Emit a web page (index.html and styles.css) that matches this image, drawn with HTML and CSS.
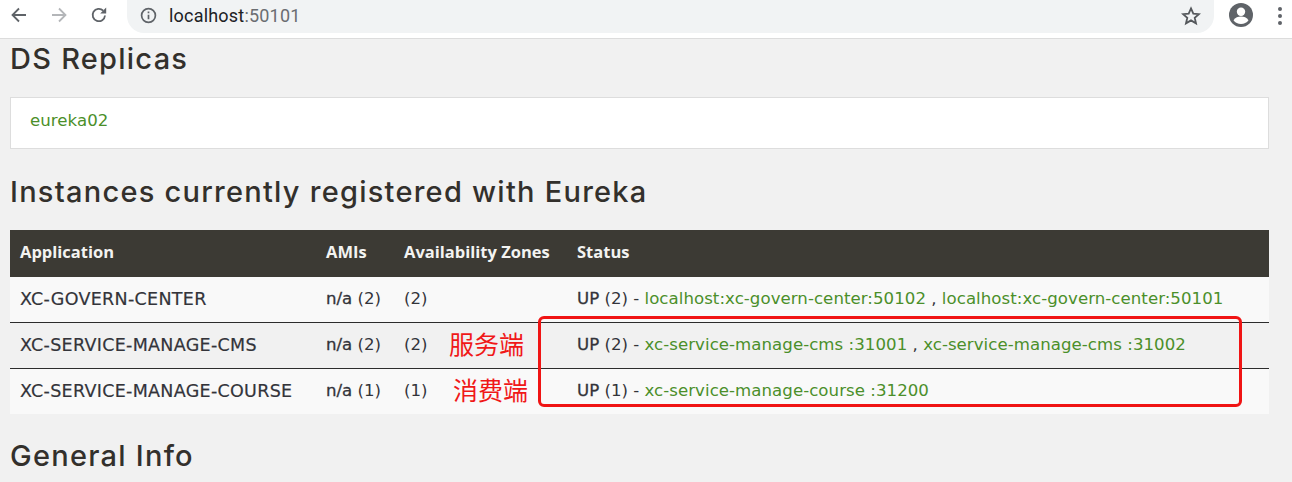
FILE: index.html
```html
<!DOCTYPE html>
<html lang="en">
<head>
<meta charset="utf-8">
<title>Eureka</title>
<link rel="stylesheet" href="styles.css">
</head>
<body>
<header class="toolbar">
  <svg class="nav nav-back" viewBox="0 0 18 18"><path d="M16 9H3M9 2.5 2.5 9 9 15.500" /></svg>
  <svg class="nav nav-forward" viewBox="0 0 18 18"><path d="M2 9h13M9 2.500 15.500 9 9 15.500" /></svg>
  <svg class="nav nav-reload" viewBox="0 0 18 18"><path d="M15 9.500A6.200 6.200 0 1 1 13.200 4.600" /><path class="solid" d="M16.200 1.500v6h-6z" /></svg>
  <div class="omnibox">
    <svg class="info" viewBox="0 0 16 16"><circle cx="8" cy="8" r="6.500" /><path d="M8 7.200v4.300M8 4.300v1.500" /></svg>
    <span class="url">localhost<span class="url-dim">:50101</span></span>
    <svg class="star" viewBox="0 0 20 20"><path d="M10 2.400l2.300 5.200 5.600.5-4.200 3.700 1.300 5.500-5-2.900-5 2.900 1.300-5.500-4.200-3.700 5.600-.5z" /></svg>
  </div>
  <svg class="avatar" viewBox="0 0 24 24"><circle class="disc" cx="12" cy="12" r="12" /><circle class="face" cx="12" cy="8.800" r="4.200" /><path class="face" d="M4.500 17.200c1.600-2.700 4.700-3.700 7.500-3.700s5.900 1 7.500 3.700A9.500 9.500 0 0 1 12 21a9.500 9.500 0 0 1-7.500-3.800z" /></svg>
  <div class="menu"><i></i><i></i><i></i></div>
</header>
<main class="page">
  <h2 class="first">DS Replicas</h2>
  <div class="panel"><a href="#">eureka02</a></div>
  <h2>Instances currently registered with Eureka</h2>
  <table class="instances">
    <colgroup><col class="c1"><col class="c2"><col class="c3"><col></colgroup>
    <thead><tr><th>Application</th><th>AMIs</th><th>Availability Zones</th><th>Status</th></tr></thead>
    <tbody>
      <tr><td class="app">XC-GOVERN-CENTER</td><td><b>n/a</b> (2)</td><td>(2)</td><td><b>UP</b> (2) - <a href="#">localhost:xc-govern-center:50102</a> , <a href="#">localhost:xc-govern-center:50101</a></td></tr>
      <tr><td class="app">XC-SERVICE-MANAGE-CMS</td><td><b>n/a</b> (2)</td><td>(2)</td><td><b>UP</b> (2) - <a href="#">xc-service-manage-cms :31001</a> , <a href="#">xc-service-manage-cms :31002</a></td></tr>
      <tr><td class="app">XC-SERVICE-MANAGE-COURSE</td><td><b>n/a</b> (1)</td><td>(1)</td><td><b>UP</b> (1) - <a href="#">xc-service-manage-course :31200</a></td></tr>
    </tbody>
  </table>
  <h2 class="last">General Info</h2>
</main>
<span class="note note-a">服务端</span>
<span class="note note-b">消费端</span>
<div class="redbox"></div>
</body>
</html>
```
FILE: styles.css
```css
html, body { margin: 0; height: 482px; overflow: hidden; }
body { background: #f1f1f1; font-family: "DejaVu Sans", sans-serif; color: #2f3034; position: relative; }
.toolbar { height: 39px; box-sizing: border-box; background: #fff; border-bottom: 1px solid #dcdcdc; display: flex; align-items: flex-start; padding-left: 10px; }
.nav { width: 18px; height: 18px; margin-top: 6px; fill: none; stroke: #5f6368; stroke-width: 1.800; }
.nav-forward { margin-left: 22px; stroke: #b4b6b9; }
.nav-reload { margin-left: 22px; }
.nav .solid { fill: #5f6368; stroke: none; }
.omnibox { margin-left: 19px; width: 1087px; height: 33px; background: #f1f3f4; border-radius: 0 0 17px 17px; display: flex; align-items: center; box-sizing: border-box; padding: 0 13px 2px 13px; }
.info { width: 17px; height: 17px; fill: none; stroke: #5f6368; stroke-width: 1.600; }
.url { margin-left: 12px; font-size: 18px; letter-spacing: 0.2px; color: #202124; font-family: "Roboto", sans-serif; }
.url-dim { color: #6a6d71; }
.star { margin-left: auto; width: 20px; height: 20px; fill: none; stroke: #55585c; stroke-width: 1.800; }
.avatar { width: 24px; height: 24px; margin: 3px 0 0 15px; }
.disc { fill: #5f6368; }
.face { fill: #fff; }
.menu { margin: 7px 0 0 25px; display: flex; flex-direction: column; gap: 3px; }
.menu i { width: 4px; height: 4px; border-radius: 50%; background: #5f6368; }
.page { padding: 0 23px 0 10px; }
h2 { margin: 0; font-family: "Inter", sans-serif; font-weight: 500; font-size: 29px; line-height: 36px; color: #33302c; letter-spacing: 1.250px; }
h2.first { padding-top: 2px; }
.panel { margin-top: 20px; height: 52px; box-sizing: border-box; background: #fff; border: 1px solid #dddddd; padding: 11px 19px; font-size: 16.600px; line-height: 24px; }
a { color: #4b8f2a; text-decoration: none; letter-spacing: 0.05px; }
.panel + h2 { margin-top: 25px; }
.instances { margin-top: 20px; width: 1259px; table-layout: fixed; border-collapse: collapse; font-size: 16.600px; }
.c1 { width: 306px; } .c2 { width: 78px; } .c3 { width: 173px; }
th { height: 47px; padding: 0 10px 5px; box-sizing: border-box; background: #3c3a34; color: #f3f3f1; text-align: left; font-family: "Open Sans", sans-serif; font-weight: 700; font-size: 16.500px; }
td { height: 43px; padding: 0 10px 2px; box-sizing: content-box; white-space: nowrap; color: #33343a; }
td.app { font-size: 17.500px; letter-spacing: 0.3px; -webkit-text-stroke: 0.2px; }
td b { font-weight: 400; -webkit-text-stroke: 0.3px; }
tbody tr { border-bottom: 1px solid #2c2c2c; }
tbody tr:nth-child(odd) { background: #f9f9f9; }
tbody tr:last-child { border-bottom: 0; }
.last { margin-top: 24px; }
.note { position: absolute; color: #f01818; font-family: "Noto Sans CJK SC", sans-serif; font-size: 25px; line-height: 30px; }
.note-a { left: 449px; top: 328px; }
.note-b { left: 453px; top: 374px; }
.redbox { position: absolute; left: 538px; top: 316px; width: 698px; height: 85px; border: 3px solid #f01414; border-radius: 6px; }
```
